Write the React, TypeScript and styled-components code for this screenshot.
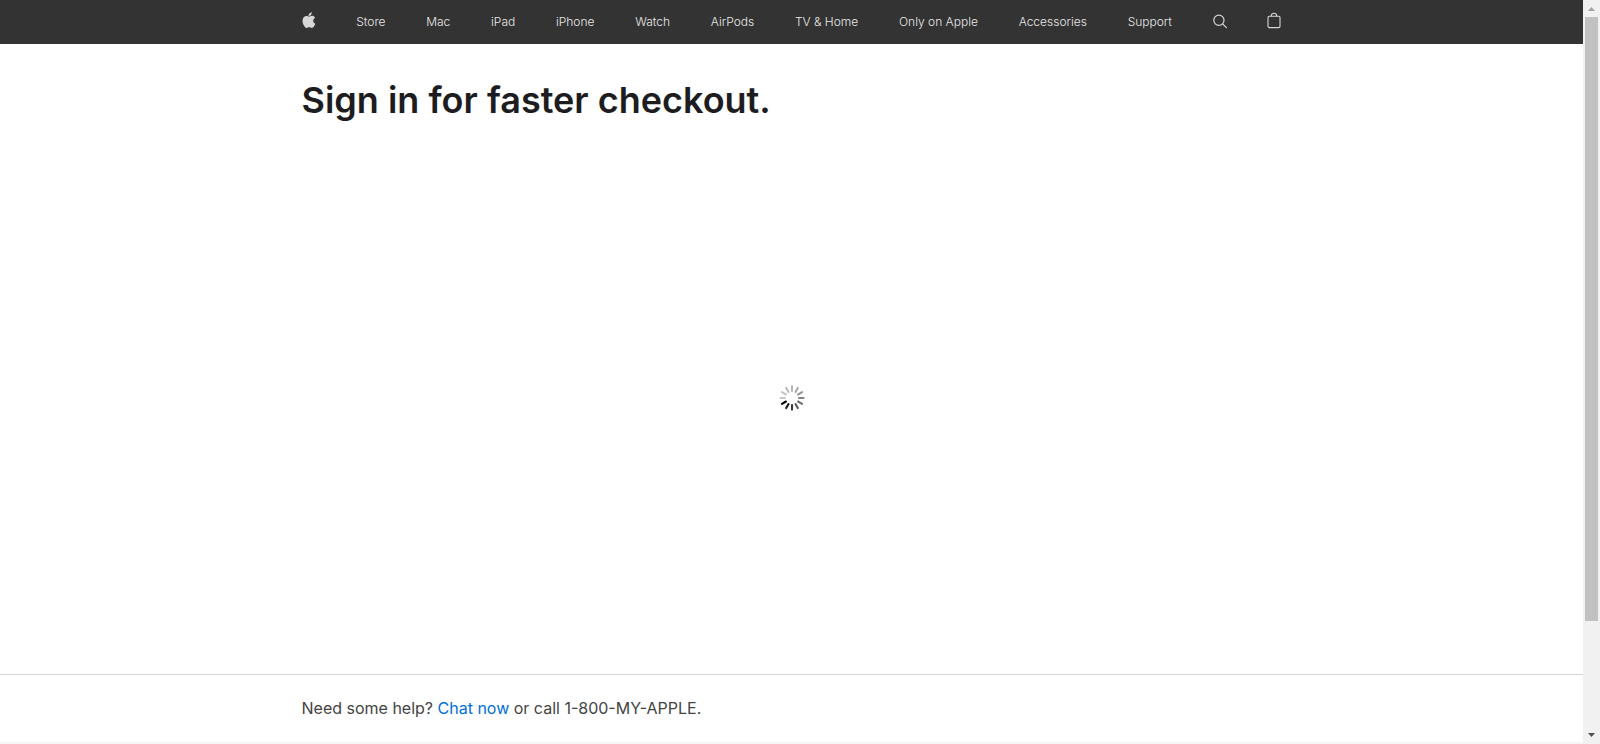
import React from "react";
import styled, { createGlobalStyle } from "styled-components";

const GlobalStyle = createGlobalStyle`
  *, *::before, *::after { box-sizing: border-box; }
  body {
    margin: 0;
    background: #fff;
    color: #1d1d1f;
    font-family: Inter, "Liberation Sans", sans-serif;
  }
`;

const Viewport = styled.div`
  display: flex;
  align-items: stretch;
  min-height: 100vh;
`;

const Page = styled.div`
  flex: 1;
  min-width: 0;
  display: flex;
  flex-direction: column;
`;

const Content = styled.div`
  width: 100%;
  max-width: 980px;
  margin: 0 auto;
`;

const GlobalNav = styled.nav`
  background: #333;
`;

const NavList = styled.ul`
  height: 44px;
  margin: 0;
  padding: 0;
  list-style: none;
  display: flex;
  align-items: center;
  justify-content: space-between;
`;

const NavLink = styled.a`
  display: flex;
  align-items: center;
  height: 44px;
  color: #e8e8e8;
  font-size: 12px;
  font-weight: 300;
  line-height: 44px;
  text-decoration: none;
  white-space: nowrap;
`;

const IconLink = styled(NavLink)`
  padding-bottom: 3px;
`;

const Main = styled.main`
  flex: 1;
  display: flex;
  flex-direction: column;
`;

const Title = styled.h1`
  margin: 0;
  padding-top: 32px;
  font-size: 36px;
  font-weight: 600;
  line-height: 48px;
`;

const LoadingArea = styled.div`
  flex: 1;
  display: flex;
  align-items: center;
  justify-content: center;
  padding-bottom: 2px;
`;

const HelpBar = styled.section`
  border-top: 1px solid #d2d2d7;
`;

const HelpText = styled.p`
  margin: 0;
  padding: 21px 0;
  font-size: 16px;
  line-height: 25px;
  color: #444;
`;

const ChatLink = styled.a`
  color: #0070d9;
  text-decoration: none;
`;

const Footer = styled.footer`
  height: 2px;
  background: #f5f5f7;
`;

const ScrollRail = styled.div`
  position: sticky;
  top: 0;
  width: 17px;
  height: 100vh;
  display: flex;
  flex-direction: column;
  align-items: center;
  background: #f1f1f1;
`;

const RailTrack = styled.div`
  flex: 1;
  width: 13px;
`;

const RailThumb = styled.div`
  height: 85%;
  background: #c1c1c1;
`;

const RailArrow = styled.svg`
  display: block;
  width: 17px;
  height: 17px;
`;

const links = [
  "Store", "Mac", "iPad", "iPhone", "Watch", "AirPods",
  "TV & Home", "Only on Apple", "Accessories", "Support",
];

const spokeColors = [
  "#b4b4b4", "#a8a8a8", "#989898", "#848484", "#707070", "#585858",
  "#383838", "#181818", "#000000", "#c8c8c8", "#c4c4c4", "#bcbcbc",
];

const AppleLogo = () => (
  <svg width="14" height="17" viewBox="0 0 14 17" fill="#d6d6d6" aria-hidden="true">
    <path d="M9.8.3c.1 1-.3 1.900-.9 2.600-.6.7-1.500 1.200-2.400 1.200-.1-.9.300-1.900.9-2.500C8 .9 9 .4 9.800.3z" />
    <path d="M12.900 5.900c-.2.100-1.700 1-1.700 2.900 0 2.200 2 3 2 3 0 .1-.3 1.100-1 2.200-.7.900-1.300 1.900-2.400 1.900-1 0-1.300-.6-2.600-.6-1.200 0-1.600.6-2.600.6S3 15 2.200 13.900C1.200 12.600.5 10.500.5 8.600c0-3.100 2-4.700 4-4.700 1.100 0 1.900.7 2.600.7.600 0 1.600-.8 2.900-.8.500 0 2 .1 2.900 1.500v.6z" />
  </svg>
);

const SearchIcon = () => (
  <svg width="14" height="16" viewBox="0 0 14 16" fill="none" stroke="#d6d6d6" strokeWidth="1.200" aria-hidden="true">
    <circle cx="5.900" cy="7.200" r="5.100" />
    <path d="M9.600 10.900l3.800 3.800" strokeLinecap="round" />
  </svg>
);

const BagIcon = () => (
  <svg width="14" height="17" viewBox="0 0 14 17" fill="none" stroke="#d6d6d6" strokeWidth="1.100" aria-hidden="true">
    <rect x="1" y="4.200" width="12" height="11.400" rx="1.300" />
    <path d="M4.100 4.200C4.300 2.400 5.400 1.300 7 1.300S9.700 2.400 9.900 4.200" />
  </svg>
);

const Spinner = () => (
  <svg width="26" height="26" viewBox="-13 -13 26 26" role="img" aria-label="Loading">
    {spokeColors.map((color, i) => (
      <line
        key={i}
        x1="0"
        y1="-7"
        x2="0"
        y2="-11.600"
        stroke={color}
        strokeWidth="2.100"
        strokeLinecap="round"
        transform={`rotate(${i * 30})`}
      />
    ))}
  </svg>
);

export default function App() {
  return (
    <>
      <GlobalStyle />
      <Viewport>
        <Page>
          <GlobalNav aria-label="Global">
            <Content>
              <NavList>
                <li><IconLink href="#apple" aria-label="Apple"><AppleLogo /></IconLink></li>
                {links.map((label) => (
                  <li key={label}><NavLink href="#nav">{label}</NavLink></li>
                ))}
                <li><IconLink href="#search" aria-label="Search"><SearchIcon /></IconLink></li>
                <li><IconLink href="#bag" aria-label="Shopping Bag"><BagIcon /></IconLink></li>
              </NavList>
            </Content>
          </GlobalNav>
          <Main>
            <Content><Title>Sign in for faster checkout.</Title></Content>
            <LoadingArea><Spinner /></LoadingArea>
          </Main>
          <HelpBar>
            <Content>
              <HelpText>
                Need some help? <ChatLink href="#chat">Chat now</ChatLink> or call 1-800-MY-APPLE.
              </HelpText>
            </Content>
          </HelpBar>
          <Footer />
        </Page>
        <ScrollRail aria-hidden="true">
          <RailArrow viewBox="0 0 17 17"><path d="M5 11h7L8.500 7z" fill="#a3a3a3" /></RailArrow>
          <RailTrack><RailThumb /></RailTrack>
          <RailArrow viewBox="0 0 17 17"><path d="M5 6h7l-3.500 4z" fill="#505050" /></RailArrow>
        </ScrollRail>
      </Viewport>
    </>
  );
}
